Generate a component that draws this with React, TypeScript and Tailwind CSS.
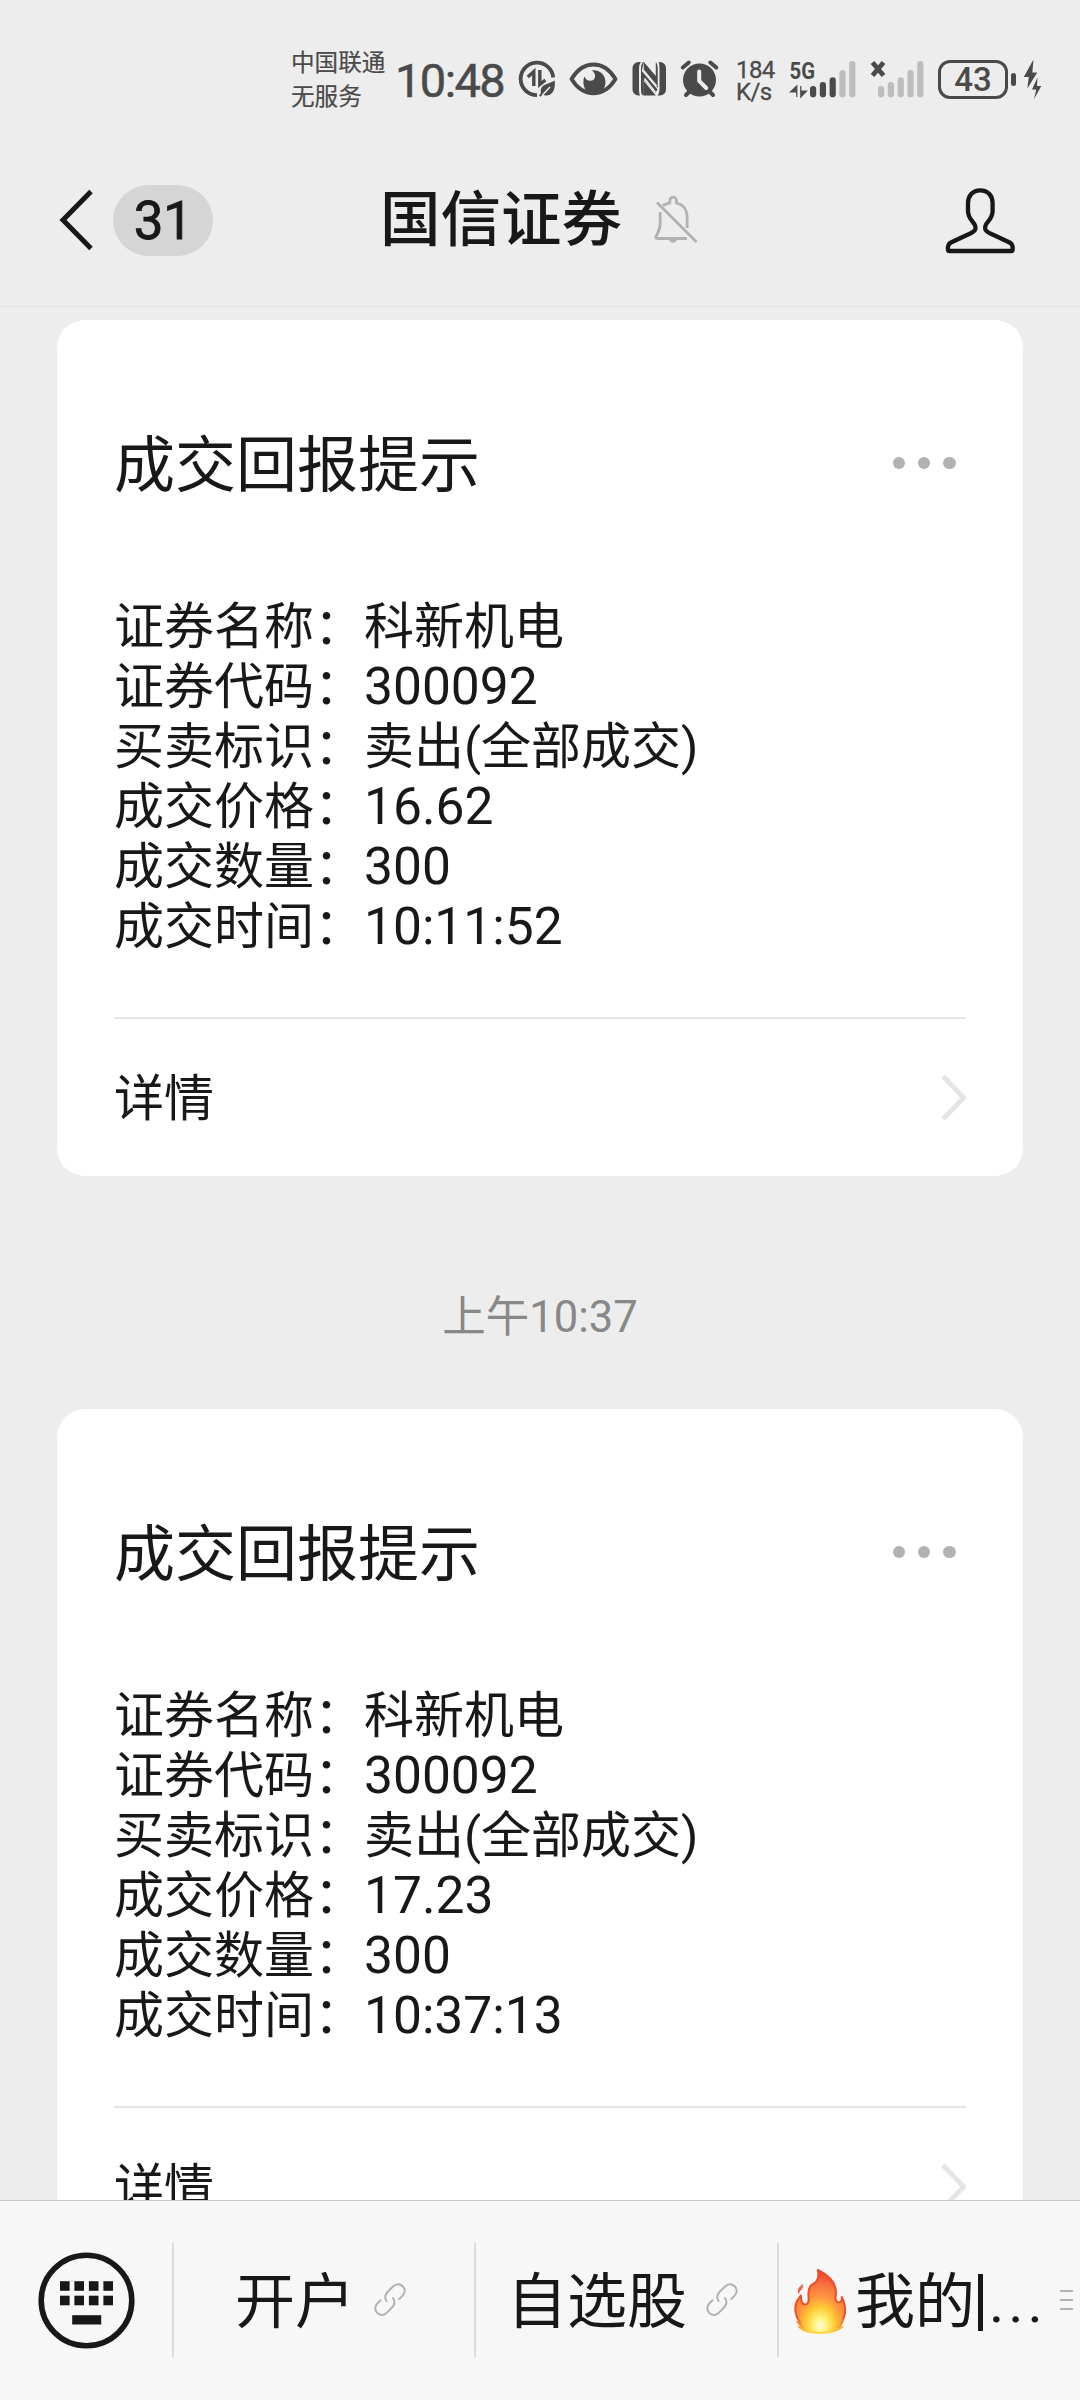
import { type ReactNode } from "react";

/*
 * Official-account chat: status bar, nav bar, trade report cards and the
 * account menu pinned to the bottom.
 */

type Field = readonly [string, string];

const REPORTS: ReadonlyArray<{ time?: string; fields: ReadonlyArray<Field> }> = [
  {
    fields: [
      ["证券名称", "科新机电"],
      ["证券代码", "300092"],
      ["买卖标识", "卖出(全部成交)"],
      ["成交价格", "16.62"],
      ["成交数量", "300"],
      ["成交时间", "10:11:52"],
    ],
  },
  {
    time: "上午10:37",
    fields: [
      ["证券名称", "科新机电"],
      ["证券代码", "300092"],
      ["买卖标识", "卖出(全部成交)"],
      ["成交价格", "17.23"],
      ["成交数量", "300"],
      ["成交时间", "10:37:13"],
    ],
  },
];

function SignalBars({ x, active }: { x: number; active: number }) {
  return (
    <>
      {[86, 82, 77.3, 70, 61].map((top, i) => (
        <rect
          key={top}
          x={x + i * 9.8}
          y={top}
          width="6.2"
          height={97.3 - top}
          rx="3.1"
          fill={i < active ? "#4a4a4a" : "#bdbdbd"}
        />
      ))}
    </>
  );
}

function StatusBar() {
  return (
    <div className="flex h-[134px] shrink-0 items-center pt-6 pl-[291px] text-[#4a4a4a]">
      <div className="w-[104px] pt-0.5 text-[23.6px] leading-[34px] whitespace-nowrap [-webkit-text-stroke:0.2px_currentColor]">
        <p>中国联通</p>
        <p>无服务</p>
      </div>
      <p className="w-[121px] pt-[3px] text-[47px] leading-none tracking-[-1.6px] whitespace-nowrap [-webkit-text-stroke:0.5px_currentColor]">
        10:48
      </p>

      {/* data saver */}
      <svg className="shrink-0" width="42" height="42" viewBox="516 58 42 42" aria-hidden>
        <path d="M553.2 77.5A16.3 16.3 0 1 0 537 95.2" fill="none" stroke="#4a4a4a" strokeWidth="3.8" />
        <path d="M533.8 86V71.5l-6 5.5M539.8 70v14.5l5.6-4.500" fill="none" stroke="#4a4a4a" strokeWidth="3.4" />
        <path d="M554.8 80.5c.6 8-1.5 15-8.6 15-1.5 0-2.7-.4-3.7-1l-1.9 2.3-1.6-1.3 2-2.6c-1.500-8.600 6.500-8.300 13.800-12.400z" fill="#4a4a4a" />
        <path d="M542.5 95l7.5-8" stroke="#ededed" strokeWidth="1.5" />
      </svg>
      {/* eye comfort */}
      <svg className="ml-2.5 shrink-0" width="52" height="42" viewBox="568 58 52 42" aria-hidden>
        <path d="M571.5 79C577 70 585 64.5 593.5 64.5S610 70 615.5 79C610 88 602 93.3 593.5 93.3S577 88 571.5 79z" fill="none" stroke="#4a4a4a" strokeWidth="3.8" strokeLinejoin="round" />
        <path d="M592 70.400c5 3.600 3.600 10.600-1.800 10.400-3 0-4.400-1.600-5.900-4.400-3 9 1.500 17.500 9.700 17.500 7 0 11.500-5.400 11.500-12 0-6.500-6-12.700-13.500-11.500z" fill="#4a4a4a" />
      </svg>
      {/* nfc */}
      <svg className="ml-2.5 shrink-0" width="38" height="42" viewBox="630 58 38 42" aria-hidden>
        <path d="M638.5 62h2.5c-1.700 2-2 4-2 8v17c0 4 0 6.500 1 8.500h-1.500a6 6 0 0 1-6-6V68a6 6 0 0 1 6-6z" fill="#4a4a4a" />
        <path d="M660 95.5h-2.500c1.700-2 2-4 2-8v-17c0-4 0-6.500-1-8.500h1.500a6 6 0 0 1 6 6v21.500a6 6 0 0 1-6 6z" fill="#4a4a4a" />
        <path d="M643.800 62h-.8c-1.600 2-2 4-2 8v17c0 4.500 0 8.500 2.800 8.500V79.500l11.500 13.500 2.200-3.500-15.700-18.500z" fill="#4a4a4a" />
        <path d="M643.800 62l12 14V62c1.600 2 1.900 4 1.900 8v18l-13.900-16.500zM643.800 81v14.500h12z" fill="#4a4a4a" />
        <path d="M643.5 70.500l13 15.500M644.500 78.500l11 14" stroke="#ededed" strokeWidth="1.8" />
      </svg>
      {/* alarm */}
      <svg className="ml-2.5 shrink-0" width="44" height="42" viewBox="678 58 44 42" aria-hidden>
        <circle cx="699.5" cy="80" r="16.5" fill="#4a4a4a" />
        <path d="M682.8 67.500l6-5M716.300 67.500l-6-5" stroke="#4a4a4a" strokeWidth="4" strokeLinecap="round" />
        <path d="M686 95l4-4M713 95l-4-4" stroke="#4a4a4a" strokeWidth="4" strokeLinecap="round" />
        <path d="M699.2 71.500v9.500l7 7" fill="none" stroke="#ededed" strokeWidth="4" strokeLinecap="round" />
      </svg>

      <div className="ml-3.5 w-[52px] pt-[3px] text-[24px] leading-[22px] tracking-[-0.6px] [-webkit-text-stroke:0.3px_currentColor]">
        <p>184</p>
        <p>K/s</p>
      </div>

      <svg className="shrink-0" width="70" height="42" viewBox="788 58 70 42" aria-hidden>
        <text x="789.5" y="79" fontSize="23.5" fontWeight="700" textLength="25.5" lengthAdjust="spacingAndGlyphs" fill="#4a4a4a">
          5G
        </text>
        <path d="M796.8 97V86l-6.300 6h6M800.800 86v11l5.700-6h-5.500" fill="#4a4a4a" stroke="#4a4a4a" strokeWidth="1.2" />
        <SignalBars x={810} active={3} />
      </svg>
      <svg className="ml-2.5 shrink-0" width="58" height="42" viewBox="868 58 58 42" aria-hidden>
        <path d="M872.5 62.500l11 13M883.500 62.500l-11 13" stroke="#4a4a4a" strokeWidth="4.8" />
        <SignalBars x={878} active={0} />
      </svg>

      <div className="ml-3 flex h-[39px] w-[70px] shrink-0 items-center justify-center rounded-[12px] border-[3px] border-[#4a4a4a] text-[33px] leading-none font-medium">
        43
      </div>
      <div className="ml-[3px] h-[13px] w-[5px] shrink-0 rounded-[2.5px] bg-[#4a4a4a]" />
      <svg className="ml-1.5 shrink-0" width="22" height="42" viewBox="1022 58 22 42" aria-hidden>
        <path d="M1033.5 59.500L1023.800 77h5l-1.500 11.500 10-16h-5zM1037.500 77.500l-5.500 12h4.300l-2.300 9.500 7.300-13h-4.300z" fill="#4a4a4a" />
      </svg>
    </div>
  );
}

function NavBar() {
  return (
    <header className="flex h-[173px] shrink-0 items-center border-b border-[#e2e2e2] text-[#181818]">
      <svg className="ml-[58px] shrink-0" width="38" height="64" viewBox="58 189 38 64" aria-hidden>
        <path d="M91 192.500L63 221l28 28.500" fill="none" stroke="#181818" strokeWidth="5" />
      </svg>
      <div className="ml-[17px] flex h-[71px] w-[100px] items-center justify-center rounded-full bg-[#d5d5d5] pt-[3px] text-[53px] leading-none tracking-[-0.5px] [-webkit-text-stroke:0.8px_currentColor]">
        31
      </div>
      <h1 className="ml-[167px] pt-0.5 text-[60.5px] leading-none font-medium whitespace-nowrap">国信证券</h1>
      {/* muted bell */}
      <svg className="ml-[31px] shrink-0" width="46" height="50" viewBox="653 194 46 50" aria-hidden>
        <g fill="none" stroke="#b2b2b2" strokeWidth="2.8">
          <path d="M663 204.500c2-1.300 4.500-1.800 6.800-2.500v-2.500a3.300 3.300 0 0 1 6.600 0v2.500c6 1.400 10.100 5.500 10.600 12 .3 4 0 8 .2 13" />
          <path d="M660.2 211v11c0 7-1.800 9-3.800 12.500-1 2-.7 3 1 3h29.600" />
          <path d="M657 201.500l39.500 39.500" />
        </g>
        <path d="M669 238.500h8c-.5 4.200-7.500 4.200-8 0z" fill="#b2b2b2" />
      </svg>
      <svg className="mt-0.5 ml-[245px] shrink-0" width="72" height="70" viewBox="944 186 72 70" aria-hidden>
        <path
          d="M980.3 190.300c-7.700 0-12.300 5.700-12.300 12.700v8c0 10 9 11.500 7.400 18-.8 3-4.400 4-7.400 5.500l-17 8c-2.700 1.400-3.500 4-3 7.500.1.700.5 1 1.200 1h62.200c.7 0 1.100-.3 1.200-1 .5-3.500-.3-6.100-3-7.500l-17-8c-3-1.500-6.600-2.500-7.400-5.500-1.600-6.500 7.400-8 7.400-18v-8c0-7-4.600-12.700-12.300-12.700z"
          fill="none"
          stroke="#181818"
          strokeWidth="4.3"
        />
      </svg>
    </header>
  );
}

function ReportCard({ fields }: { fields: ReadonlyArray<Field> }) {
  return (
    <article className="mx-[57px] rounded-[28px] bg-white px-[57px] pt-[103px] text-[#181818]">
      <div className="flex h-20 items-center justify-between">
        <h2 className="pt-1.5 text-[61px] leading-none">成交回报提示</h2>
        <div className="mr-[10.5px] flex gap-[12.6px]">
          <span className="size-[12.5px] rounded-full bg-[#b2b2b2]" />
          <span className="size-[12.5px] rounded-full bg-[#b2b2b2]" />
          <span className="size-[12.5px] rounded-full bg-[#b2b2b2]" />
        </div>
      </div>
      <dl className="mt-[94px] text-[50px] leading-[60px]">
        {fields.map(([label, value]) => (
          <div key={label} className="flex h-[60px]">
            <dt className="w-[250px]">{label}：</dt>
            <dd className={/^[\d.:]+$/.test(value) ? "text-[51.5px]" : ""}>{value}</dd>
          </div>
        ))}
      </dl>
      <div className="mt-[60px] flex h-[159px] items-center justify-between border-t-2 border-[#e5e5e5] text-[50px]">
        <span className="pt-[3px]">详情</span>
        <svg width="28" height="50" viewBox="938 1073 28 50" aria-hidden>
          <path d="M943 1076.300l20.700 21.400-20.700 21.400" fill="none" stroke="#e5e5e5" strokeWidth="5" />
        </svg>
      </div>
    </article>
  );
}

function LinkIcon() {
  return (
    <svg className="shrink-0" width="34" height="34" viewBox="373 2284 34 34" aria-hidden>
      <g fill="none" stroke="#b2b2b2" strokeWidth="2" strokeLinecap="round">
        <path d="M386.5 2302c-2-3-1.300-6.500 1-9l5.500-5.500c3-3 7-3 9.700-.3s2.700 6.700-.3 9.700l-3.200 3.200" />
        <path d="M393 2299c2 3 1.700 6.500-.6 9l-5.500 5.600c-3 3-7 3-9.700.3s-2.700-6.700.3-9.700l3-3" />
      </g>
    </svg>
  );
}

function Flame() {
  return (
    <svg className="mt-1 shrink-0" width="52" height="66" viewBox="0 0 52 66" aria-hidden>
      <defs>
        <radialGradient id="flame" cx="0.5" cy="0.88" r="0.85">
          <stop offset="0" stopColor="#fffde0" />
          <stop offset="0.15" stopColor="#fff27a" />
          <stop offset="0.35" stopColor="#ffc933" />
          <stop offset="0.52" stopColor="#fd9a3e" />
          <stop offset="0.75" stopColor="#f97440" />
          <stop offset="1" stopColor="#ee4328" />
        </radialGradient>
        <linearGradient id="flame-edge" x1="0" y1="0" x2="0" y2="1">
          <stop offset="0" stopColor="#ee4a28" />
          <stop offset="0.75" stopColor="#f0501f" />
          <stop offset="1" stopColor="#ffd84a" />
        </linearGradient>
      </defs>
      <path
        d="M24 1c12 6 20 14 17.500 27-.3 3 1 5.500 3.500 5.500 2.500-.2 3.300-3 2.500-6 4 7 5 16 1.500 23-1 4-3 7-4 7.500l2.500.3c-3 2.700-9 5.500-21.500 5.700-12-.2-18-3-20.500-5.700l3-.5c-1-.8-3.300-2.500-4.500-4.300l2 .2C1 47 0 38 3 32c1.500-2.500 3-4 4-6-.3 5 1 9.500 4 9.500 3.500 0 4-4 3.500-8.500-.5-5 1-10.500 5.500-12.500 3.500-2 5-7 4-13.500z"
        fill="url(#flame)"
        stroke="url(#flame-edge)"
        strokeWidth="2"
      />
      <path d="M9 15c1 5-3 6-4.500 10.500C2.500 20 5 18 9 15z" fill="#ee6a50" />
    </svg>
  );
}

function MenuItem({ className, children }: { className: string; children: ReactNode }) {
  return (
    <div className={`flex h-[114px] shrink-0 items-center border-l-2 border-[#dcdcdc] whitespace-nowrap ${className}`}>
      {children}
    </div>
  );
}

function BottomMenu() {
  return (
    <nav className="flex h-[200px] shrink-0 items-center border-t border-[#c8c8c8] bg-[#f7f7f7] pb-px text-[60px] leading-none text-[#181818]">
      <div className="flex w-[172px] shrink-0 pl-[37px]">
        <svg width="100" height="100" viewBox="37 2250 100 100" aria-hidden>
          <circle cx="86.5" cy="2300.5" r="45.3" fill="none" stroke="#181818" strokeWidth="5.6" />
          {[60, 74.4, 88.9, 103.4].map((x) => (
            <g key={x} fill="#181818">
              <rect x={x} y="2281.2" width="9.6" height="9.6" />
              <rect x={x} y="2295.7" width="9.6" height="9.6" />
            </g>
          ))}
          <rect x="72.2" y="2315.2" width="29" height="9.3" fill="#181818" />
        </svg>
      </div>
      <MenuItem className="w-[302px] gap-[18px] pl-[61px]">
        <span className="pt-1.5">开户</span>
        <LinkIcon />
      </MenuItem>
      <MenuItem className="w-[303px] gap-[18px] pl-[31px]">
        <span className="pt-1.5">自选股</span>
        <LinkIcon />
      </MenuItem>
      <MenuItem className="w-[303px] pl-[15px]">
        <Flame />
        <span className="ml-[9px] pt-1.5">我的</span>
        <span className="mt-1 ml-[3px] h-[57px] w-[5px] bg-[#181818]" />
        <span className="ml-1.5 pt-1 text-[58px] tracking-[4px]">...</span>
        <div className="ml-[13px] flex flex-col gap-[7px]">
          <span className="h-0.5 w-[13px] bg-[#b2b2b2]" />
          <span className="h-0.5 w-[13px] bg-[#b2b2b2]" />
          <span className="h-0.5 w-[13px] bg-[#b2b2b2]" />
        </div>
      </MenuItem>
    </nav>
  );
}

export default function App() {
  return (
    <div className="flex h-[2400px] w-[1080px] flex-col overflow-hidden bg-[#ededed] font-[Roboto,'Noto_Sans_CJK_SC',sans-serif]">
      <StatusBar />
      <NavBar />
      <main className="min-h-0 flex-1 overflow-hidden pt-[13px]">
        {REPORTS.map(({ time, fields }, i) => (
          <section key={i}>
            {time && (
              <p className="h-[233px] pt-[112px] text-center text-[43.5px] leading-[60px] text-[#888888]">{time}</p>
            )}
            <ReportCard fields={fields} />
          </section>
        ))}
      </main>
      <BottomMenu />
    </div>
  );
}
